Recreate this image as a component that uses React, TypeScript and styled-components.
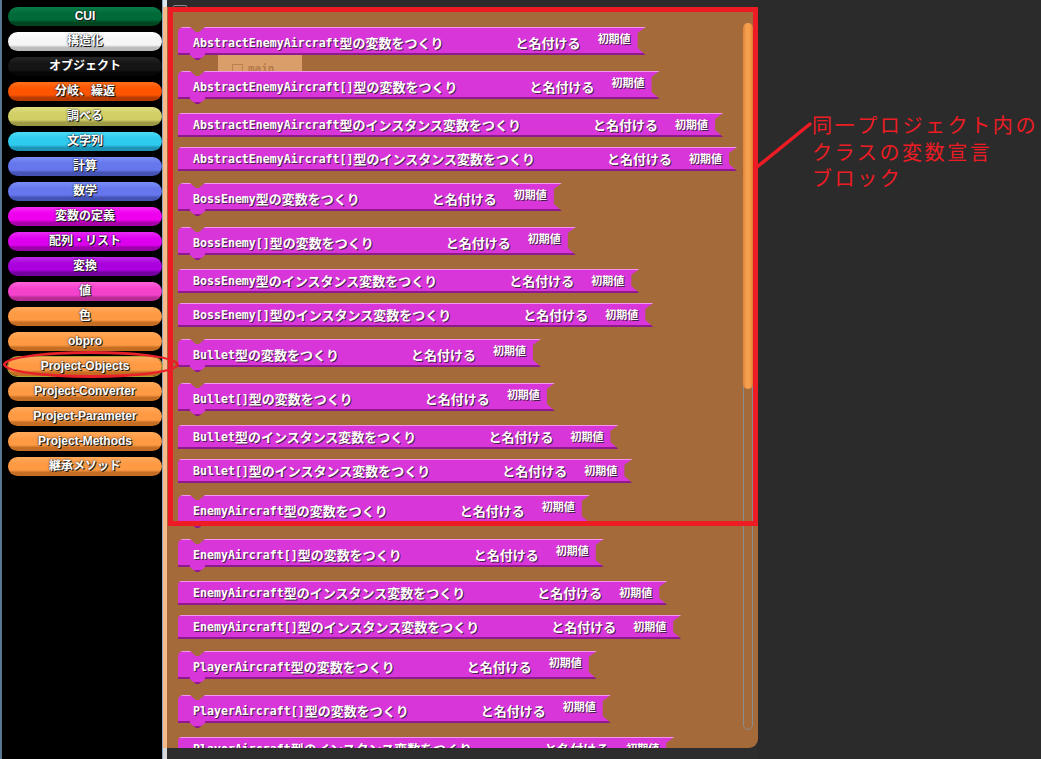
import React from "react";
import styled, { createGlobalStyle, css } from "styled-components";

const GlobalStyle = createGlobalStyle`
  *, *::before, *::after { box-sizing: border-box; }
  html, body { margin: 0; padding: 0; background: #2b2b2b; }
  body { width: 1041px; height: 759px; overflow: hidden; }
`;

const RED = "#ed1c24";
const BODY = "#d836d8";
const HI = "#f394f3";
const SH = "#8f1a8f";

type Kind = "var" | "inst";

const Root = styled.div`
  position: relative;
  width: 1041px;
  height: 759px;
  display: flex;
  background: #2b2b2b;
  overflow: hidden;
`;

/* ---------- sidebar ---------- */
const Sidebar = styled.nav`
  width: 163px;
  flex: none;
  background: #000;
  border-left: 2px solid #5b7692;
  border-right: 1px solid #8fa6bd;
  padding: 7px 0 0 6px;
  display: flex;
  flex-direction: column;
  gap: 6px;
`;

const Pill = styled.div<{ $c: [string, string, string]; $selected?: boolean }>`
  height: 19px;
  width: 154px;
  flex: none;
  border-radius: 10px;
  background: linear-gradient(
    to bottom,
    ${(p) => p.$c[0]} 0%,
    ${(p) => p.$c[1]} 35%,
    ${(p) => p.$c[1]} 68%,
    ${(p) => p.$c[2]} 82%,
    ${(p) => p.$c[2]} 100%
  );
  display: flex;
  align-items: center;
  justify-content: center;
  color: #fff;
  font: 700 12px/19px "Liberation Sans", "Noto Sans CJK JP", sans-serif;
  text-shadow: 1px 1px 0 #1a1a1a, 0 0 2px #000;
  white-space: nowrap;
  ${(p) =>
    p.$selected &&
    css`
      box-shadow: 0 0 0 1px #a7a436;
    `}
`;

/* ---------- strip ---------- */
const Strip = styled.div`
  width: 4px;
  flex: none;
  display: flex;
  flex-direction: column;
`;
const StripTop = styled.div`
  height: 7px;
  background: #dfe6ee;
`;
const StripBody = styled.div`
  flex: 1;
  background: #f7ba8a;
`;
const StripFoot = styled.div`
  height: 11px;
  background: #d8d8d8;
`;

/* ---------- main column ---------- */
const MainCol = styled.div`
  width: 591px;
  flex: none;
  display: flex;
  flex-direction: column;
`;
const TopBar = styled.div`
  height: 7px;
  background: #2b2b2b;
  padding: 5px 0 0 6px;
`;
const MiniBox = styled.div`
  width: 14px;
  height: 2px;
  border: 1px solid #8a8a8a;
  border-bottom: none;
  border-radius: 2px 2px 0 0;
`;
const Flyout = styled.div`
  position: relative;
  height: 741px;
  flex: none;
  background: #a56a39;
  border-bottom-right-radius: 9px;
  overflow: hidden;
  padding: 20px 0 0 11px;
  display: flex;
  flex-direction: column;
  align-items: flex-start;
`;
const BottomBar = styled.div`
  flex: 1;
  background: #2d2d2d;
`;

const Ghost = styled.div`
  position: absolute;
  left: 51px;
  top: 44px;
  width: 84px;
  height: 40px;
  background: #d99e6a;
  display: flex;
  align-items: flex-start;
  gap: 5px;
  padding: 9px 0 0 14px;
`;
const GhostBox = styled.div`
  width: 11px;
  height: 11px;
  margin-top: 4px;
  border: 1px solid #b9814d;
`;
const GhostText = styled.span`
  color: #b57a48;
  font: 700 11px/18px "DejaVu Sans Mono", monospace;
`;

const varClip = `polygon(
  0 5px, 1px 2px, 2px 1px, 5px 0,
  12px 0, 18px 5px, 21px 5px, 27px 0,
  100% 0, calc(100% - 8px) 6px, calc(100% - 8px) 21px, 100% 28px,
  27px 28px, 21px 33px, 18px 33px, 12px 28px,
  0 28px
)`;
const instClip = `polygon(
  0 3px, 1px 1px, 3px 0,
  100% 0, calc(100% - 8px) 6px, calc(100% - 8px) 17px, 100% 24px,
  0 24px
)`;

const Block = styled.div<{ $kind: Kind; $gap: number }>`
  position: relative;
  flex: none;
  display: flex;
  align-items: flex-start;
  color: #fff;
  white-space: nowrap;
  text-shadow: 1px 1px 0 #4b1f4b;
  margin-bottom: ${(p) => p.$gap}px;
  ${(p) =>
    p.$kind === "var"
      ? css`
          height: 33px;
          padding: 4px 15px 0 15px;
          background: linear-gradient(
            to bottom,
            ${HI} 0 1px,
            ${BODY} 1px 26px,
            ${SH} 26px 28px,
            ${BODY} 28px 31px,
            ${SH} 31px 33px
          );
          clip-path: ${varClip};
          &::after {
            content: "";
            position: absolute;
            left: 12px;
            top: 26px;
            width: 15px;
            height: 5px;
            background: ${BODY};
          }
        `
      : css`
          height: 24px;
          padding: 0 15px 0 15px;
          background: linear-gradient(
            to bottom,
            ${HI} 0 1px,
            ${BODY} 1px 22px,
            ${SH} 22px 24px
          );
          clip-path: ${instClip};
        `}
`;

const Label = styled.span`
  display: flex;
  align-items: center;
  height: 24px;
`;
const Mono = styled.span`
  font: 700 11.6px/24px "DejaVu Sans Mono", monospace;
`;
const Jp = styled.span`
  font: 700 13px/24px "Noto Sans CJK JP", sans-serif;
`;
const NameSlot = styled.span`
  width: 72px;
  flex: none;
`;
const Naming = styled.span`
  font: 700 13px/24px "Noto Sans CJK JP", sans-serif;
  margin-right: 17px;
`;
const Initial = styled.span<{ $kind: Kind }>`
  font: 700 11px/12px "Noto Sans CJK JP", sans-serif;
  margin-top: ${(p) => (p.$kind === "var" ? "1px" : "5px")};
`;

const Scrollbar = styled.div`
  position: absolute;
  right: 5px;
  top: 16px;
  width: 10px;
  height: 707px;
  border: 1px solid #8b8b8b;
  border-radius: 5px;
`;
const Thumb = styled.div`
  margin: -1px;
  height: 366px;
  border-radius: 5px;
  background: linear-gradient(to right, #e0843a, #f6a352 40%, #f39845 75%, #d9792f);
`;

/* ---------- note ---------- */
const Note = styled.div`
  flex: 1;
  padding: 112px 0 0 54px;
  color: ${RED};
  font: 400 20px/26.5px "Noto Sans CJK JP", sans-serif;
  letter-spacing: 2.6px;
  white-space: nowrap;
`;
const NoteLine = styled.div``;

/* ---------- overlays ---------- */
const RedFrame = styled.div`
  position: absolute;
  left: 168px;
  top: 7px;
  width: 590px;
  height: 519px;
  border: 5px solid ${RED};
  pointer-events: none;
`;
const RedEllipse = styled.div`
  position: absolute;
  left: 3px;
  top: 351px;
  width: 176px;
  height: 27px;
  border: 3px solid #e8202a;
  border-radius: 50%;
  pointer-events: none;
`;
const Pointer = styled.svg`
  position: absolute;
  left: 754px;
  top: 120px;
  width: 62px;
  height: 52px;
  pointer-events: none;
`;

const ORANGE: [string, string, string] = ["#ffaa5c", "#ff9a44", "#c56d22"];
const PURPLE_BLUE: [string, string, string] = ["#7c8ef6", "#6677ee", "#4553b5"];

const categories: { label: string; c: [string, string, string]; selected?: boolean }[] = [
  { label: "CUI", c: ["#0b7c4a", "#006a38", "#00451f"] },
  { label: "構造化", c: ["#ffffff", "#f6f6f6", "#bcbcbc"] },
  { label: "オブジェクト", c: ["#262626", "#151515", "#060606"] },
  { label: "分岐、繰返", c: ["#ff6f1a", "#ff5500", "#b83b00"] },
  { label: "調べる", c: ["#e0de80", "#d2cf66", "#9c9a45"] },
  { label: "文字列", c: ["#4ddaf6", "#2ecbef", "#1d94b5"] },
  { label: "計算", c: PURPLE_BLUE },
  { label: "数学", c: PURPLE_BLUE },
  { label: "変数の定義", c: ["#f52cf5", "#ee00ee", "#aa00aa"] },
  { label: "配列・リスト", c: ["#e72cf6", "#dd00ee", "#9c00aa"] },
  { label: "変換", c: ["#bb2ce9", "#aa00dd", "#7400a0"] },
  { label: "値", c: ["#ff62da", "#f542cc", "#b82d95"] },
  { label: "色", c: ORANGE },
  { label: "obpro", c: ORANGE },
  { label: "Project-Objects", c: ORANGE, selected: true },
  { label: "Project-Converter", c: ORANGE },
  { label: "Project-Parameter", c: ORANGE },
  { label: "Project-Methods", c: ORANGE },
  { label: "継承メソッド", c: ORANGE },
];

const CLASSES = ["AbstractEnemyAircraft", "BossEnemy", "Bullet", "EnemyAircraft", "PlayerAircraft"];
const blocks: { name: string; kind: Kind }[] = CLASSES.flatMap((c) => [
  { name: c, kind: "var" as Kind },
  { name: c + "[]", kind: "var" as Kind },
  { name: c, kind: "inst" as Kind },
  { name: c + "[]", kind: "inst" as Kind },
]);

function gapAfter(i: number): number {
  const cur = blocks[i].kind;
  const next = blocks[i + 1]?.kind ?? "var";
  if (cur === "var") return next === "var" ? 11 : 9;
  return next === "var" ? 12 : 10;
}

export default function App() {
  return (
    <>
      <GlobalStyle />
      <Root>
        <Sidebar>
          {categories.map((cat) => (
            <Pill key={cat.label} $c={cat.c} $selected={cat.selected}>
              {cat.label}
            </Pill>
          ))}
        </Sidebar>
        <Strip>
          <StripTop />
          <StripBody />
          <StripFoot />
        </Strip>
        <MainCol>
          <TopBar>
            <MiniBox />
          </TopBar>
          <Flyout>
            <Ghost>
              <GhostBox />
              <GhostText>main</GhostText>
            </Ghost>
            {blocks.map((b, i) => (
              <Block key={i} $kind={b.kind} $gap={gapAfter(i)}>
                <Label>
                  <Mono>{b.name}</Mono>
                  <Jp>{b.kind === "var" ? "型の変数をつくり" : "型のインスタンス変数をつくり"}</Jp>
                </Label>
                <NameSlot />
                <Naming>と名付ける</Naming>
                <Initial $kind={b.kind}>初期値</Initial>
              </Block>
            ))}
            <Scrollbar>
              <Thumb />
            </Scrollbar>
          </Flyout>
          <BottomBar />
        </MainCol>
        <Note>
          <NoteLine>同一プロジェクト内の</NoteLine>
          <NoteLine>クラスの変数宣言</NoteLine>
          <NoteLine>ブロック</NoteLine>
        </Note>
        <RedFrame />
        <RedEllipse />
        <Pointer viewBox="0 0 62 52">
          <line x1="3" y1="47" x2="56" y2="4" stroke={RED} strokeWidth="3.5" strokeLinecap="round" />
        </Pointer>
      </Root>
    </>
  );
}
